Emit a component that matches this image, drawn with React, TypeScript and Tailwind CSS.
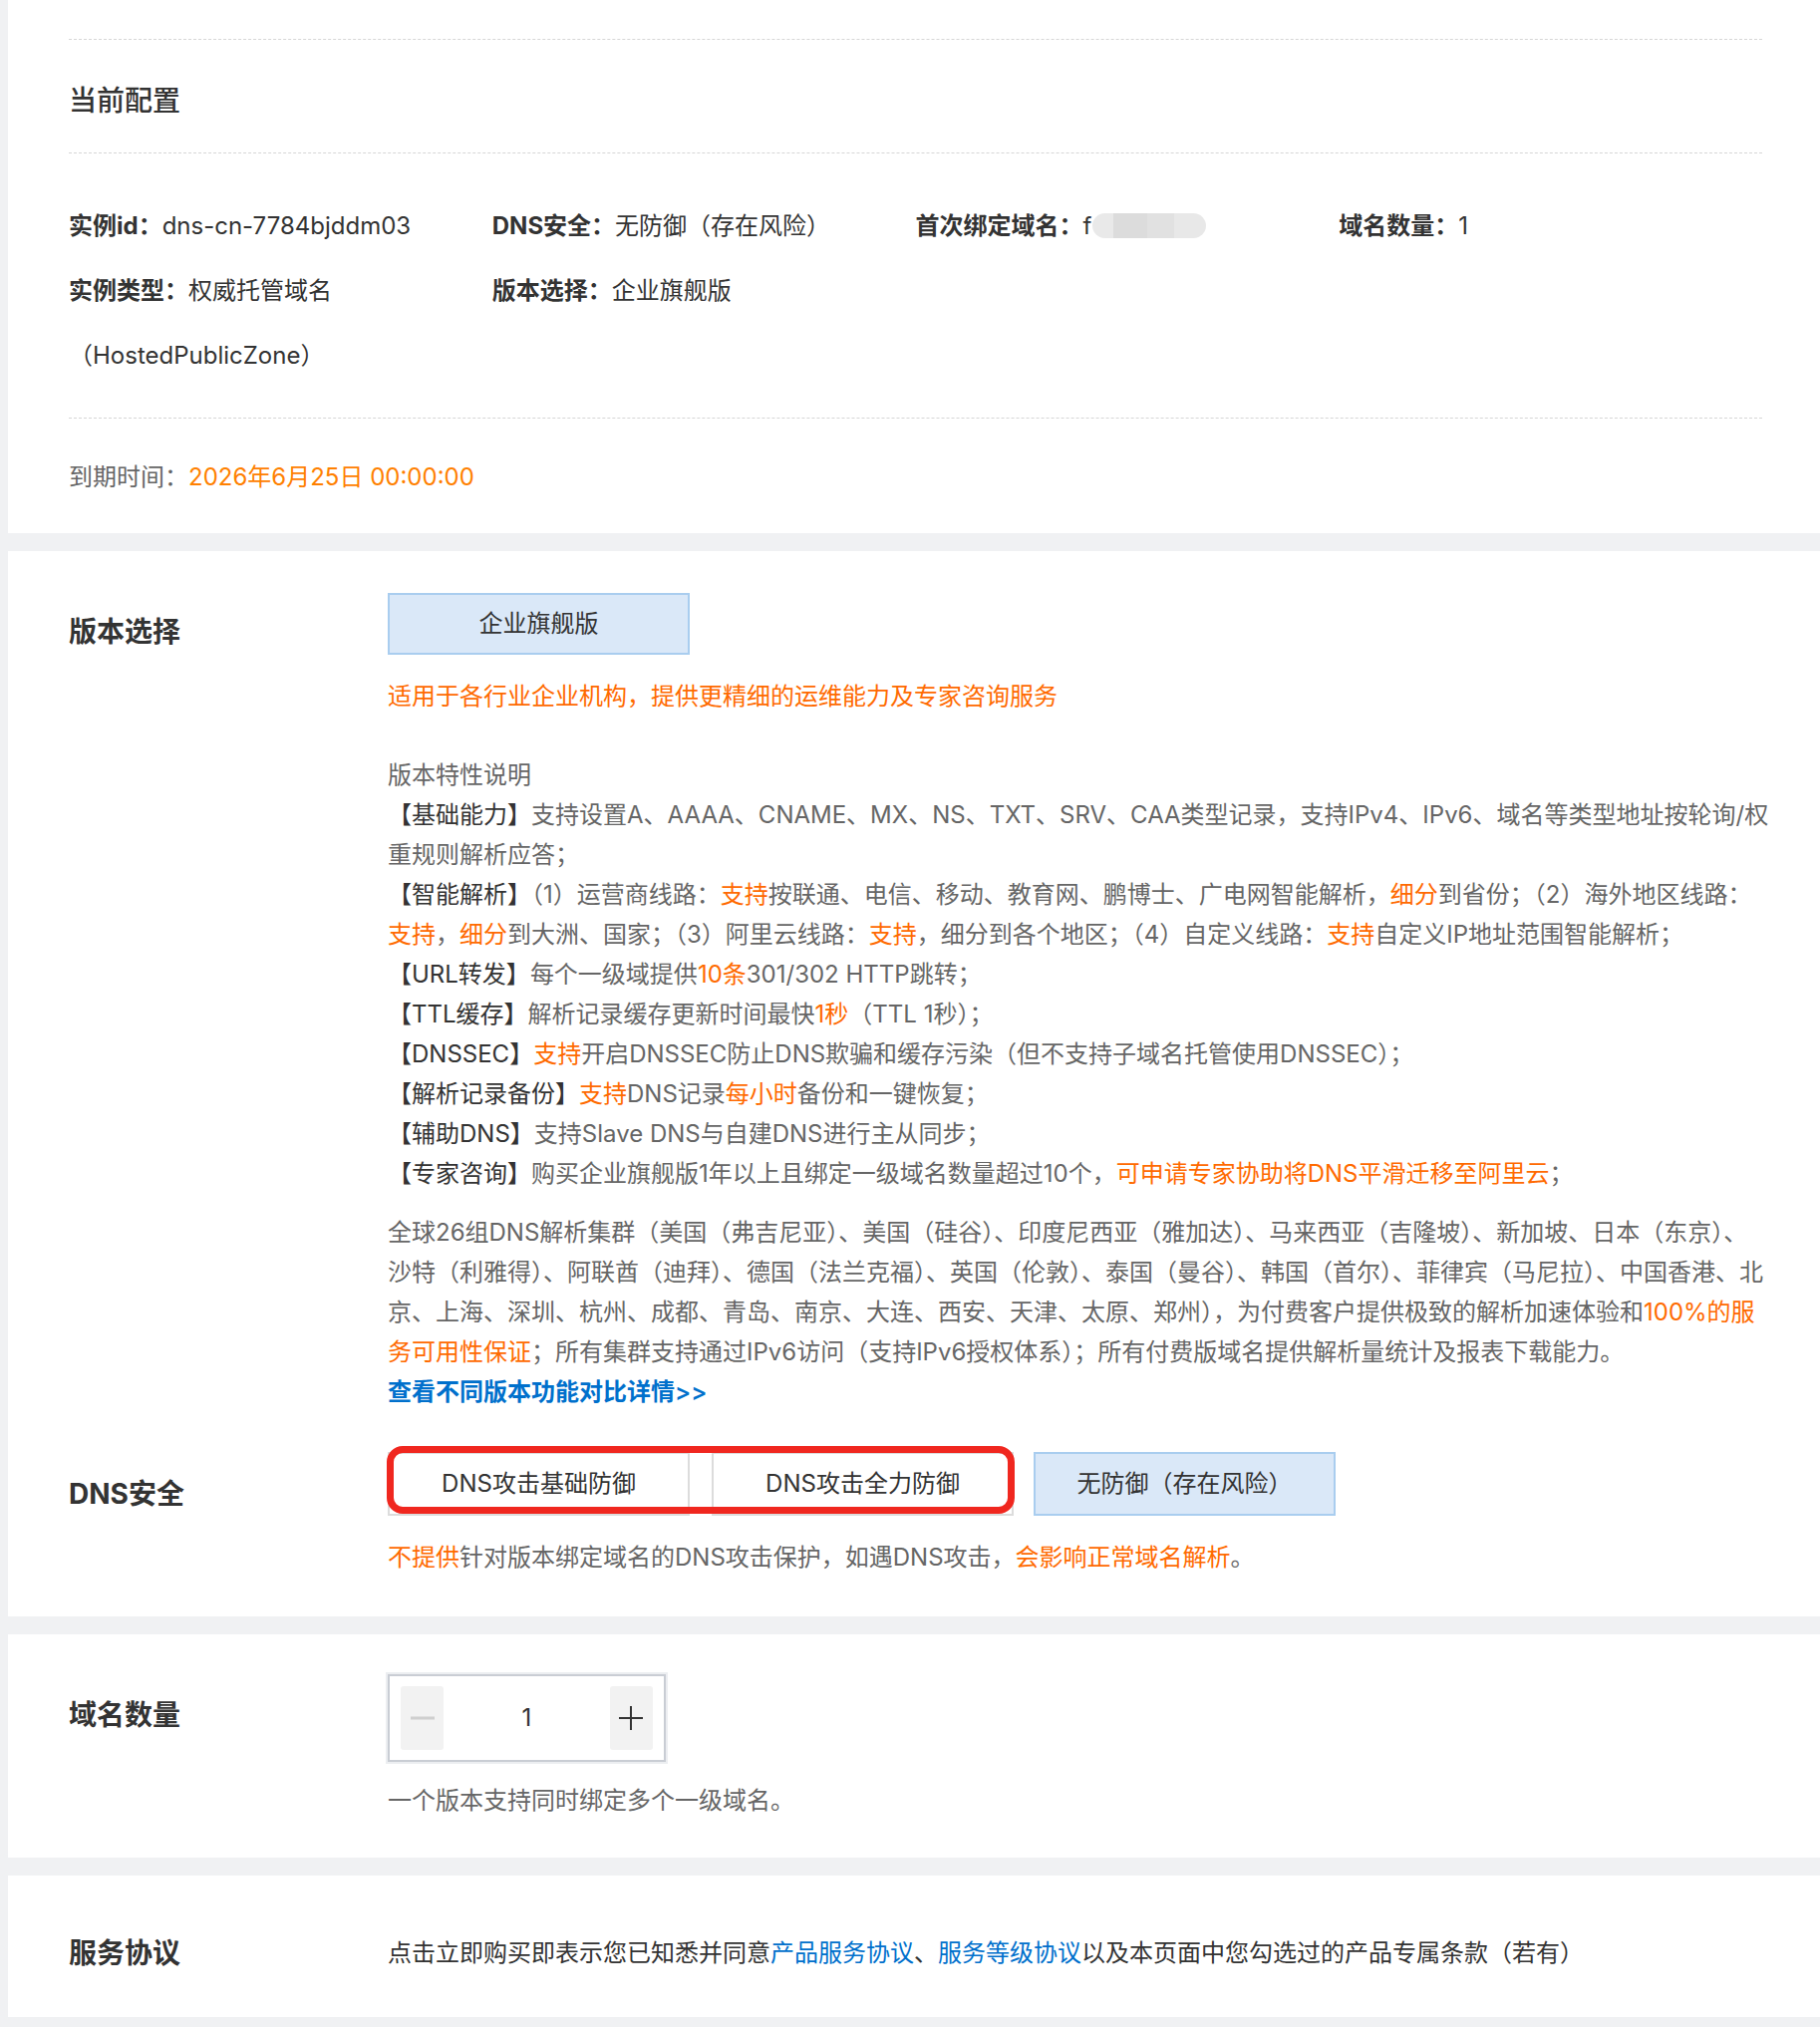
import React from "react";

const O = ({ children }: { children: React.ReactNode }) => (
  <span className="text-[#ff6a00]">{children}</span>
);
const H = ({ children }: { children: React.ReactNode }) => (
  <span className="text-[#333333]">{children}</span>
);

function InfoItem({ label, children }: { label: string; children?: React.ReactNode }) {
  return (
    <div className="text-[24px] leading-[65px] text-[#333333]">
      <span className="font-bold">{label}</span>
      {children}
    </div>
  );
}

function Label({ children, mt }: { children: React.ReactNode; mt: string }) {
  return (
    <div className={`w-[320px] shrink-0 text-[28px] font-bold leading-[40px] h-[40px] text-[#333333] ${mt}`}>
      {children}
    </div>
  );
}

export default function App() {
  return (
    <div className="w-full bg-[#f0f1f3] pl-[8px] pb-[10px] font-['Inter','Noto_Sans_CJK_SC',sans-serif] flex flex-col gap-[18px]">
      {/* Card 1 */}
      <div className="bg-white h-[535px] overflow-hidden pl-[61px] pr-[58px] pt-[39px]">
        <div className="border-t border-dashed border-[#d6d6d6]" />
        <div className="pt-[41px] pb-[32px] text-[28px] leading-[40px] font-medium text-[#333333]">当前配置</div>
        <div className="border-t border-dashed border-[#d6d6d6]" />
        <div className="grid grid-cols-4 pt-[40px] pb-[30px]">
          <InfoItem label="实例id：">dns-cn-7784bjddm03</InfoItem>
          <InfoItem label="DNS安全：">无防御（存在风险）</InfoItem>
          <InfoItem label="首次绑定域名：">
            f
            <span className="inline-block align-middle ml-[1px] -mt-[4px] w-[114px] h-[25px] rounded-full bg-[linear-gradient(90deg,#e9e9e9_0%,#e9e9e9_18%,#dcdcdc_18%,#dcdcdc_48%,#e1e1e1_48%,#e1e1e1_72%,#e8e8e8_72%,#e8e8e8_100%)]" />
          </InfoItem>
          <InfoItem label="域名数量：">1</InfoItem>
          <InfoItem label="实例类型：">
            权威托管域名
            <br />
            （HostedPublicZone）
          </InfoItem>
          <InfoItem label="版本选择：">企业旗舰版</InfoItem>
          <div />
          <div />
        </div>
        <div className="border-t border-dashed border-[#d6d6d6]" />
        <div className="pt-[39px] text-[24px] leading-[40px] h-[79px]">
          <span className="text-[#666666]">到期时间：</span>
          <span className="text-[#ff8000]">2026年6月25日 00:00:00</span>
        </div>
      </div>

      {/* Card 2 */}
      <div className="bg-white h-[1069px] overflow-hidden pl-[61px] pr-[58px] pt-[42px]">
        <div className="flex">
          <Label mt="mt-[19px]">版本选择</Label>
          <div className="flex-1">
            <div className="w-[303px] h-[62px] flex items-center justify-center bg-[#dae8f8] border-2 border-[#a9cdef] text-[24px] text-[#333333]">
              企业旗舰版
            </div>
            <div className="mt-[22px] h-[40px] text-[24px] leading-[40px] text-[#ff6a00]">
              适用于各行业企业机构，提供更精细的运维能力及专家咨询服务
            </div>
            <div className="mt-[39px] text-[24px] leading-[40px] text-[#666666] whitespace-nowrap [&>div]:h-[40px]">
              <div>版本特性说明</div>
              <div>
                <H>【基础能力】</H>支持设置A、AAAA、CNAME、MX、NS、TXT、SRV、CAA类型记录，支持IPv4、IPv6、域名等类型地址按轮询/权
              </div>
              <div>重规则解析应答；</div>
              <div>
                <H>【智能解析】</H>（1）运营商线路：<O>支持</O>按联通、电信、移动、教育网、鹏博士、广电网智能解析，<O>细分</O>到省份；（2）海外地区线路：
              </div>
              <div>
                <O>支持</O>，<O>细分</O>到大洲、国家；（3）阿里云线路：<O>支持</O>，细分到各个地区；（4）自定义线路：<O>支持</O>自定义IP地址范围智能解析；
              </div>
              <div>
                <H>【URL转发】</H>每个一级域提供<O>10条</O>301/302 HTTP跳转；
              </div>
              <div>
                <H>【TTL缓存】</H>解析记录缓存更新时间最快<O>1秒</O>（TTL 1秒）；
              </div>
              <div>
                <H>【DNSSEC】</H><O>支持</O>开启DNSSEC防止DNS欺骗和缓存污染（但不支持子域名托管使用DNSSEC）；
              </div>
              <div>
                <H>【解析记录备份】</H><O>支持</O>DNS记录<O>每小时</O>备份和一键恢复；
              </div>
              <div>
                <H>【辅助DNS】</H>支持Slave DNS与自建DNS进行主从同步；
              </div>
              <div>
                <H>【专家咨询】</H>购买企业旗舰版1年以上且绑定一级域名数量超过10个，<O>可申请专家协助将DNS平滑迁移至阿里云</O>；
              </div>
            </div>
            <div className="mt-[19px] text-[24px] leading-[40px] text-[#666666] whitespace-nowrap [&>div]:h-[40px]">
              <div>全球26组DNS解析集群（美国（弗吉尼亚）、美国（硅谷）、印度尼西亚（雅加达）、马来西亚（吉隆坡）、新加坡、日本（东京）、</div>
              <div>沙特（利雅得）、阿联酋（迪拜）、德国（法兰克福）、英国（伦敦）、泰国（曼谷）、韩国（首尔）、菲律宾（马尼拉）、中国香港、北</div>
              <div>
                京、上海、深圳、杭州、成都、青岛、南京、大连、西安、天津、太原、郑州），为付费客户提供极致的解析加速体验和<O>100%的服</O>
              </div>
              <div>
                <O>务可用性保证</O>；所有集群支持通过IPv6访问（支持IPv6授权体系）；所有付费版域名提供解析量统计及报表下载能力。
              </div>
              <div className="font-semibold text-[#0070cc]">查看不同版本功能对比详情&gt;&gt;</div>
            </div>
          </div>
        </div>

        <div className="flex mt-[40px]">
          <Label mt="mt-[22px]">DNS安全</Label>
          <div className="flex-1">
            <div className="flex items-start">
              <div className="relative flex gap-[22px]">
                <div className="w-[303px] h-[64px] flex items-center justify-center bg-white border-2 border-[#dcdcdc] text-[24px] text-[#333333]">
                  DNS攻击基础防御
                </div>
                <div className="w-[303px] h-[64px] flex items-center justify-center bg-white border-2 border-[#dcdcdc] text-[24px] text-[#333333]">
                  DNS攻击全力防御
                </div>
                <div className="absolute left-[-1px] right-[-1px] top-[-6px] bottom-[2px] border-[7px] border-[#f0271f] rounded-[16px] pointer-events-none" />
              </div>
              <div className="ml-[20px] w-[303px] h-[64px] flex items-center justify-center bg-[#dae8f8] border-2 border-[#a9cdef] text-[24px] text-[#333333]">
                无防御（存在风险）
              </div>
            </div>
            <div className="mt-[22px] h-[40px] text-[24px] leading-[40px] text-[#666666]">
              <O>不提供</O>针对版本绑定域名的DNS攻击保护，如遇DNS攻击，<O>会影响正常域名解析</O>。
            </div>
          </div>
        </div>
      </div>

      {/* Card 3 */}
      <div className="bg-white h-[224px] overflow-hidden pl-[61px] pr-[58px] pt-[40px]">
        <div className="flex">
          <Label mt="mt-[21px]">域名数量</Label>
          <div className="flex-1">
            <div className="w-[279px] h-[88px] border-2 border-[#c9cdd4] ring-2 ring-[#eceef1] bg-white flex items-center justify-between px-[11px]">
              <div className="w-[43px] h-[64px] bg-[#f2f2f2] rounded-[3px] flex items-center justify-center">
                <svg width="24" height="4" viewBox="0 0 24 4">
                  <line x1="0" y1="2" x2="24" y2="2" stroke="#cfcfcf" strokeWidth="3" />
                </svg>
              </div>
              <div className="text-[24px] text-[#333333]">1</div>
              <div className="w-[43px] h-[64px] bg-[#f2f2f2] rounded-[3px] flex items-center justify-center">
                <svg width="24" height="24" viewBox="0 0 24 24">
                  <line x1="0" y1="12" x2="24" y2="12" stroke="#333333" strokeWidth="2" />
                  <line x1="12" y1="0" x2="12" y2="24" stroke="#333333" strokeWidth="2" />
                </svg>
              </div>
            </div>
            <div className="mt-[19px] h-[40px] text-[24px] leading-[40px] text-[#666666]">一个版本支持同时绑定多个一级域名。</div>
          </div>
        </div>
      </div>

      {/* Card 4 */}
      <div className="bg-white h-[142px] overflow-hidden pl-[61px] pr-[58px] pt-[58px]">
        <div className="flex">
          <Label mt="mt-0">服务协议</Label>
          <div className="flex-1 h-[40px] text-[24px] leading-[40px] text-[#333333] whitespace-nowrap">
            点击立即购买即表示您已知悉并同意<span className="text-[#0070cc]">产品服务协议</span>、<span className="text-[#0070cc]">服务等级协议</span>以及本页面中您勾选过的产品专属条款（若有）
          </div>
        </div>
      </div>
    </div>
  );
}
